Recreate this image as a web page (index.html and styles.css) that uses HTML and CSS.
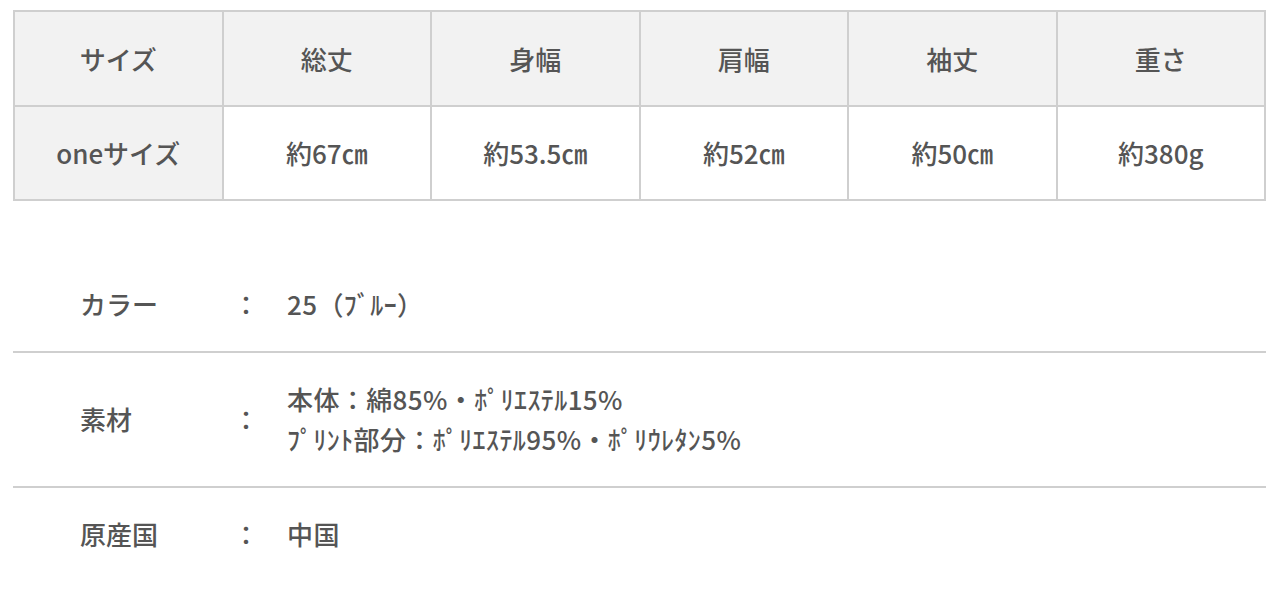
FILE: index.html
```html
<!DOCTYPE html>
<html lang="ja">
<head>
<meta charset="utf-8">
<link rel="stylesheet" href="styles.css">
</head>
<body>
<div class="wrap">
  <table class="size-table">
    <tr>
      <th>サイズ</th><th>総丈</th><th>身幅</th><th>肩幅</th><th>袖丈</th><th>重さ</th>
    </tr>
    <tr>
      <th>oneサイズ</th><td>約67㎝</td><td>約53.5㎝</td><td>約52㎝</td><td>約50㎝</td><td>約380g</td>
    </tr>
  </table>

  <div class="spec">
    <div class="row">
      <div class="label">カラー</div>
      <div class="colon">：</div>
      <div class="value">25（ﾌﾞﾙｰ）</div>
    </div>
    <div class="row">
      <div class="label">素材</div>
      <div class="colon">：</div>
      <div class="value">本体：綿85%・ﾎﾟﾘｴｽﾃﾙ15%<br>ﾌﾟﾘﾝﾄ部分：ﾎﾟﾘｴｽﾃﾙ95%・ﾎﾟﾘｳﾚﾀﾝ5%</div>
    </div>
    <div class="row last">
      <div class="label">原産国</div>
      <div class="colon">：</div>
      <div class="value">中国</div>
    </div>
  </div>
</div>
</body>
</html>
```

FILE: styles.css
```css
html, body {
  margin: 0;
  padding: 0;
  background: #fff;
}
body {
  font-family: "Noto Sans CJK JP", "Noto Sans", sans-serif;
  color: #555;
  font-weight: 500;
}
.wrap {
  margin: 10px 14px 0 13px;
}
.size-table {
  width: 100%;
  border-collapse: collapse;
  table-layout: fixed;
  border: 2px solid #cfcfcf;
}
.size-table th,
.size-table td {
  border: 2px solid #cfcfcf;
  height: 92.5px;
  padding: 0;
  text-align: center;
  font-size: 26px;
  font-weight: 500;
  color: #555;
}
.size-table th {
  background: #f2f2f2;
}
.size-table td {
  background: #fff;
}
.spec {
  margin-top: 57px;
}
.row {
  display: flex;
  align-items: center;
  padding: 26px 0 27px;
  border-bottom: 2px solid #cfcfcf;
  font-size: 26px;
  line-height: 40px;
}
.row.last {
  border-bottom: none;
}
.label {
  box-sizing: border-box;
  flex: 0 0 220px;
  padding-left: 67px;
}
.colon {
  flex: 0 0 54px;
}
.value {
  flex: 1;
  letter-spacing: 0.4px;
}
```
